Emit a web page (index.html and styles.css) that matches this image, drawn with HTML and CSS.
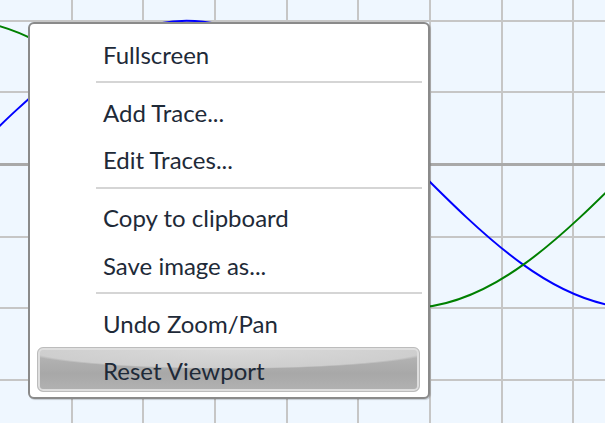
FILE: index.html
```html
<!DOCTYPE html>
<html lang="en">
<head>
<meta charset="utf-8">
<title>Plot context menu</title>
<link rel="stylesheet" href="styles.css">
</head>
<body>
<div class="plot">
  <svg class="plot-canvas" width="605" height="423" viewBox="0 0 605 423" xmlns="http://www.w3.org/2000/svg">
    <g class="grid">
      <line x1="72" y1="0" x2="72" y2="423"/>
      <line x1="143" y1="0" x2="143" y2="423"/>
      <line x1="215" y1="0" x2="215" y2="423"/>
      <line x1="287" y1="0" x2="287" y2="423"/>
      <line x1="358" y1="0" x2="358" y2="423"/>
      <line x1="430" y1="0" x2="430" y2="423"/>
      <line x1="502" y1="0" x2="502" y2="423"/>
      <line x1="573" y1="0" x2="573" y2="423"/>
      <line x1="0" y1="21" x2="605" y2="21"/>
      <line x1="0" y1="92" x2="605" y2="92"/>
      <line x1="0" y1="237" x2="605" y2="237"/>
      <line x1="0" y1="308" x2="605" y2="308"/>
      <line x1="0" y1="380" x2="605" y2="380"/>
    </g>
    <line class="axis" x1="0" y1="164.5" x2="605" y2="164.5"/>
    <path class="trace trace-blue" d="M -39 164 C 34.55 90.5, 104.89 20.8, 186.5 20.8 C 268.11 20.8, 338.45 90.5, 412 164 C 485.55 237.77, 555.89 308, 637.5 308"/>
    <path class="trace trace-green" d="M -42 20 C 39.61 20, 109.95 90.23, 183.5 164 C 257.05 237.77, 327.39 308, 409 308 C 490.61 308, 560.95 237.77, 634.5 164"/>
  </svg>

  <div class="menu">
    <div class="item"><span class="label">Fullscreen</span></div>
    <div class="sep"></div>
    <div class="item"><span class="label">Add Trace...</span></div>
    <div class="item"><span class="label">Edit Traces...</span></div>
    <div class="sep"></div>
    <div class="item"><span class="label">Copy to clipboard</span></div>
    <div class="item"><span class="label">Save image as...</span></div>
    <div class="sep"></div>
    <div class="item"><span class="label">Undo Zoom/Pan</span></div>
    <div class="item active"><span class="label">Reset Viewport</span></div>
  </div>
</div>
</body>
</html>
```

FILE: styles.css
```css
html, body {
  margin: 0;
  padding: 0;
}

body {
  width: 605px;
  height: 423px;
  overflow: hidden;
  font-family: "Lato", "Open Sans", sans-serif;
}

.plot {
  position: relative;
  width: 605px;
  height: 423px;
  background: #eff7ff;
}

.plot-canvas {
  display: block;
}

.grid line {
  stroke: #c6c6c6;
  stroke-width: 2;
}

.axis {
  stroke: #a9a9a9;
  stroke-width: 3;
}

.trace {
  fill: none;
  stroke-width: 2;
}

.trace-blue {
  stroke: #0000ff;
}

.trace-green {
  stroke: #008000;
}

.menu {
  position: absolute;
  left: 28px;
  top: 22px;
  width: 402px;
  box-sizing: border-box;
  display: flex;
  flex-direction: column;
  padding: 5.3px 0 3.7px;
  background: #ffffff;
  border: 2px solid #8a8a8a;
  border-radius: 6px;
  box-shadow: 1px 1px 1px rgba(0, 0, 0, 0.18);
}

.item {
  position: relative;
  box-sizing: border-box;
  height: 44.5px;
  margin: 1.5px 8.5px 1.5px 7px;
  padding: 3px 0 0 65px;
  border: 1px solid transparent;
  border-radius: 6px;
  font-size: 24px;
  line-height: 39.5px;
  color: #1e2a38;
  white-space: nowrap;
}

.label {
  position: relative;
}

.item.active {
  border-color: #bcbcbc;
  background:
    radial-gradient(56% 21px at 50% 0, #dadada 0%, #cecece 94%, rgba(206, 206, 206, 0) 100%),
    linear-gradient(to bottom, #b8b8b8 0%, #a8a8a8 60%, #b2b2b2 100%);
  box-shadow: inset 0 0 0 2px #dedede;
}

.sep {
  height: 2px;
  margin: 4.25px 6px 4.25px 66px;
  background: #d5d5d5;
}
```
